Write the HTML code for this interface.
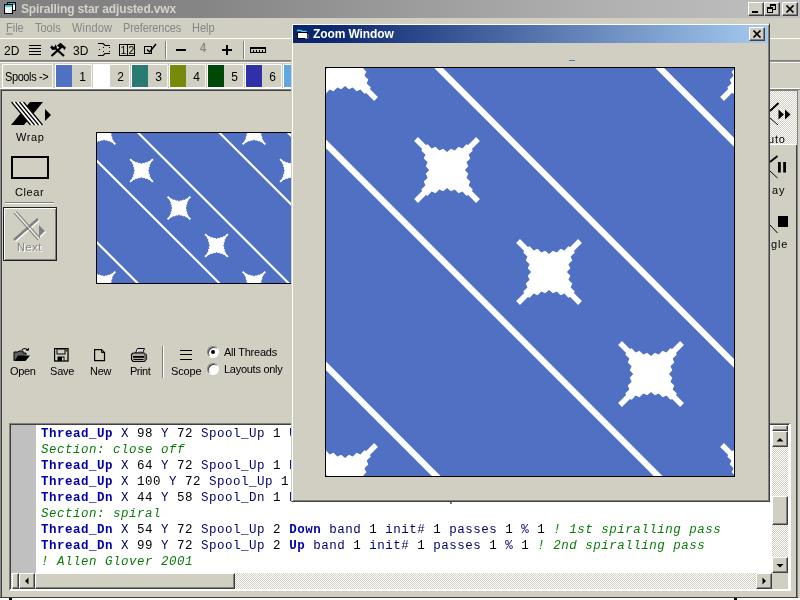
<!DOCTYPE html>
<html>
<head>
<meta charset="utf-8">
<title>Spiralling star adjusted.vwx</title>
<style>
*{box-sizing:border-box;margin:0;padding:0}
html,body{width:800px;height:600px;overflow:hidden;background:#d1cec2}
body{position:relative;will-change:transform;font-family:"Liberation Sans",sans-serif;font-size:11px;color:#000}
.a{position:absolute}
.t{position:absolute;white-space:nowrap;line-height:1}
#titlebar{left:0;top:0;width:800px;height:18px;background:linear-gradient(90deg,#808080 0%,#858585 25%,#b0b0b0 75%,#c0c0c0 100%)}
.cb{position:absolute;width:16px;height:14px;background:#d1cec2;border:1px solid;border-color:#fff #404040 #404040 #fff;box-shadow:inset -1px -1px 0 #808080}
.rb{background:#d1cec2;border:1px solid;border-color:#fff #404040 #404040 #fff;box-shadow:inset -1px -1px 0 #808080}
.m{position:absolute;top:22px;font-size:11px;color:#868686;white-space:nowrap;line-height:1;transform:scaleY(1.14);transform-origin:0 0}
.sp{position:absolute;top:64px;height:24px;width:37px;border:1px solid;border-color:#fff #f4f2ee #fff #fff}
.sp i{position:absolute;left:0;top:0;width:16px;height:22px}
.sp b{position:absolute;left:17px;top:6px;width:19px;text-align:center;font-weight:normal;font-size:12px;line-height:1;transform:scaleY(1.08);transform-origin:0 50%}
.lbl{position:absolute;white-space:nowrap;line-height:1;font-size:11px;letter-spacing:.6px}
.dith{background-color:#e9e7e3;background-image:conic-gradient(#fff 25%,#d1cec2 0 50%,#fff 0 75%,#d1cec2 0);background-size:2px 2px}
.code{position:absolute;left:41px;white-space:pre;font-family:"Liberation Mono",monospace;font-size:12.5px;letter-spacing:.499px;line-height:16px;color:#000068;height:16px}
.code b{color:#0000a4}
.code i{color:#0a7a0a}
.code s{color:#000;text-decoration:none}
</style>
</head>
<body>

<svg width="0" height="0" style="position:absolute"><defs>
<g id="star" transform="scale(0.3676)"><path d="M-27.00,-27.00L-23.14,-24.20L-19.29,-25.67L-15.43,-21.62L-11.57,-23.26L-7.71,-19.41L-3.86,-21.31L0.00,-17.90L3.86,-21.31L7.71,-19.41L11.57,-23.26L15.43,-21.62L19.29,-25.67L23.14,-24.20L27.00,-27.00L24.20,-23.14L25.67,-19.29L21.62,-15.43L23.26,-11.57L19.41,-7.71L21.31,-3.86L17.90,0.00L21.31,3.86L19.41,7.71L23.26,11.57L21.62,15.43L25.67,19.29L24.20,23.14L27.00,27.00L23.14,24.20L19.29,25.67L15.43,21.62L11.57,23.26L7.71,19.41L3.86,21.31L0.00,17.90L-3.86,21.31L-7.71,19.41L-11.57,23.26L-15.43,21.62L-19.29,25.67L-23.14,24.20L-27.00,27.00L-24.20,23.14L-25.67,19.29L-21.62,15.43L-23.26,11.57L-19.41,7.71L-21.31,3.86L-17.90,0.00L-21.31,-3.86L-19.41,-7.71L-23.26,-11.57L-21.62,-15.43L-25.67,-19.29L-24.20,-23.14Z" fill="#fff"/><path d="M-31.0,-31.0L31.0,31.0M31.0,-31.0L-31.0,31.0" stroke="#fff" stroke-width="5.4" fill="none"/></g>
<g id="pat"><rect x="-5" y="-5" width="320" height="170" fill="#4f70c3"/><path d="M21.4,-20L221.4,180" stroke="#fff" fill="none"/><path d="M-47.9,-20L152.1,180" stroke="#fff" fill="none"/><path d="M-129.5,-20L70.5,180" stroke="#fff" fill="none"/><path d="M102.7,-20L302.7,180" stroke="#fff" fill="none"/><path d="M171.4,-20L371.4,180" stroke="#fff" fill="none"/><path d="M252.1,-20L452.1,180" stroke="#fff" fill="none"/><use href="#star" x="7.00" y="150.00"/><use href="#star" x="7.00" y="0.00"/><use href="#star" x="44.50" y="37.50"/><use href="#star" x="82.00" y="75.00"/><use href="#star" x="119.50" y="112.50"/><use href="#star" x="157.00" y="150.00"/><use href="#star" x="157.00" y="0.00"/><use href="#star" x="194.50" y="37.50"/><use href="#star" x="232.00" y="75.00"/><use href="#star" x="269.50" y="112.50"/><use href="#star" x="307.00" y="150.00"/><use href="#star" x="307.00" y="0.00"/></g>
</defs></svg>

<div class="a" id="titlebar"></div>
<svg class="a" style="left:3px;top:1px" width="14" height="14" viewBox="0 0 14 14">
  <rect x="4.500" y="1.500" width="8" height="8" fill="#fff" stroke="#000" stroke-width="1"/>
  <rect x="5" y="2" width="7" height="2" fill="#30b8c8"/>
  <rect x="1.500" y="3.500" width="8" height="9" fill="#d8eef0" stroke="#000" stroke-width="1"/>
  <rect x="2" y="4" width="7" height="2" fill="#48c8d4"/>
  <rect x="3" y="7" width="4" height="5" fill="#fff"/>
</svg>
<div class="t" id="ttl" style="left:21px;top:3px;font-weight:bold;font-size:12px;color:#d6d2ca;letter-spacing:-.13px">Spiralling star adjusted.vwx</div>
<div class="cb" style="left:748px;top:2px"><div class="a" style="left:3px;top:8px;width:6px;height:2px;background:#000"></div></div>
<div class="cb" style="left:764px;top:2px">
  <div class="a" style="left:5px;top:1px;width:6px;height:6px;border:1px solid #000;border-top-width:2px"></div>
  <div class="a" style="left:2px;top:4px;width:6px;height:6px;border:1px solid #000;border-top-width:2px;background:#d1cec2"></div>
</div>
<div class="cb" style="left:782px;top:2px">
  <svg class="a" style="left:3px;top:2px" width="9" height="8" viewBox="0 0 9 8"><path d="M0.500,0.500L7.500,7.500M7.500,0.500L0.500,7.500" stroke="#000" stroke-width="1.700" fill="none"/></svg>
</div>


<div class="m" style="left:6px"><u>F</u>ile</div>
<div class="m" style="left:35px">Tools</div>
<div class="m" style="left:72px;letter-spacing:.15px">Window</div>
<div class="m" style="left:123px;letter-spacing:-.1px">Preferences</div>
<div class="m" style="left:192px">Help</div>


<div class="a" style="left:0;top:38px;width:800px;height:1px;background:#fff"></div>
<div class="a" style="left:0;top:60px;width:800px;height:1px;background:#808080"></div>
<div class="a" style="left:0;top:61px;width:800px;height:1px;background:#9a9890"></div>
<div class="a" style="left:0;top:62px;width:800px;height:1px;background:#f4f2ee"></div>
<div class="t" style="left:4px;top:45px;font-size:12px">2D</div>
<svg class="a" style="left:28px;top:43px" width="15" height="14" viewBox="0 0 15 14"><path d="M1,2.500H13M1,5.500H13M1,8.500H13M1,11.500H13" stroke="#000" stroke-width="1.200" fill="none"/></svg>
<svg class="a" style="left:49px;top:42px" width="18" height="16" viewBox="0 0 18 16">
  <path d="M2.500,14L13,4.500" stroke="#000" stroke-width="2.200" fill="none"/>
  <path d="M8,3.500L11.500,0.800L17,5.500L15.500,8L13.500,5.500L11.500,6.500Z" fill="#000"/>
  <path d="M15,14L5.500,5.500" stroke="#000" stroke-width="2.200" fill="none"/>
  <path d="M1.200,5.500L3,3.200L4.200,5L6,4.200L6,2.200L8,4.800L6.500,7.500L3.500,8Z" fill="#000"/>
</svg>
<div class="t" style="left:73px;top:45px;font-size:12px">3D</div>
<svg class="a" style="left:97px;top:42px" width="15" height="16" viewBox="0 0 15 16">
  <path d="M1,1.500H6L8,3.500H13M1,13.500H6L8,11.500H13" stroke="#000" stroke-width="1.100" fill="none"/>
  <path d="M2,7H3V8H2zM6,5H7V6H6zM6,9H7V10H6zM12,5H13V6H12zM12,9H13V10H12z" fill="#000"/>
</svg>
<div class="a" style="left:119px;top:44px;width:16px;height:12px;border:1px solid #000"></div>
<div class="a" style="left:127px;top:44px;width:1px;height:12px;background:#000"></div>
<div class="t" style="left:120px;top:45px;font-size:10.5px;width:7px;text-align:center">1</div>
<div class="t" style="left:128px;top:45px;font-size:10.5px;width:7px;text-align:center">2</div>
<div class="a" style="left:144px;top:46px;width:8px;height:8px;border:1px solid #000"></div>
<svg class="a" style="left:144px;top:42px" width="14" height="14" viewBox="0 0 14 14"><path d="M3,7.500L5.500,10L8,7L12,2" stroke="#000" stroke-width="1.500" fill="none"/></svg>
<div class="a" style="left:165px;top:41px;width:1px;height:18px;background:#808080"></div>
<div class="a" style="left:166px;top:41px;width:1px;height:18px;background:#fff"></div>
<div class="a" style="left:176px;top:49px;width:10px;height:2px;background:#000"></div>
<div class="t" style="left:200px;top:41px;font-size:13.5px;font-weight:bold;color:#8a8a8a;transform:scaleX(.82);transform-origin:0 0">4</div>
<div class="a" style="left:222px;top:49px;width:10px;height:2px;background:#000"></div>
<div class="a" style="left:226px;top:45px;width:2px;height:10px;background:#000"></div>
<div class="a" style="left:243px;top:41px;width:1px;height:18px;background:#808080"></div>
<div class="a" style="left:244px;top:41px;width:1px;height:18px;background:#fff"></div>
<svg class="a" style="left:250px;top:46px" width="17" height="8" viewBox="0 0 17 8"><path d="M0.500,6.500V1.500H15.500V6.500ZM3.500,6V4M6.500,6V4M9.500,6V4M12.500,6V4" stroke="#000" stroke-width="1.100" fill="none"/><rect x="0" y="1" width="16" height="2" fill="#000"/></svg>

<div class="a" style="left:2px;top:64px;width:51px;height:24px;border:1px solid;border-color:#fff #f4f2ee #fff #fff"></div>
<div class="t" style="left:5px;top:71px;font-size:11px;letter-spacing:-.4px;transform:scaleY(1.1);transform-origin:0 0">Spools -&gt;</div>
<div class="sp" style="left:55px"><i style="background:#4f70c3"></i><b>1</b></div>
<div class="sp" style="left:93px"><i style="background:#ffffff"></i><b>2</b></div>
<div class="sp" style="left:131px"><i style="background:#2a7a74"></i><b>3</b></div>
<div class="sp" style="left:169px"><i style="background:#788a0c"></i><b>4</b></div>
<div class="sp" style="left:207px"><i style="background:#004808"></i><b>5</b></div>
<div class="sp" style="left:245px"><i style="background:#3030a8"></i><b>6</b></div>
<div class="sp" style="left:283px"><i style="background:#60a8e4"></i><b>7</b></div>
<div class="a" style="left:0;top:88px;width:800px;height:1px;background:#fff"></div>
<div class="a" style="left:0;top:89px;width:800px;height:1px;background:#808080"></div>
<div class="a" style="left:1px;top:90px;width:796px;height:1px;background:#404040"></div>

<div class="a" style="left:0;top:90px;width:1px;height:508px;background:#8c8c8c"></div>
<div class="a" style="left:1px;top:90px;width:1px;height:508px;background:#404040"></div>
<div class="a" style="left:796px;top:90px;width:1px;height:508px;background:#404040"></div>
<div class="a" style="left:797px;top:90px;width:1px;height:508px;background:#808080"></div>
<div class="a" style="left:0;top:597px;width:798px;height:1px;background:#404040"></div>
<div class="a" style="left:0;top:598px;width:800px;height:2px;background:#fff"></div>
<div class="a" style="left:9px;top:598px;width:3px;height:2px;background:#000"></div>
<div class="a" style="left:734px;top:598px;width:3px;height:2px;background:#000"></div>


<svg class="a" style="left:10px;top:101px" width="44" height="26" viewBox="0 0 44 26">
  <path d="M1,24L14,24L33,1L20,1Z" fill="#000"/>
  <path d="M1,1L14,1L33,24L20,24Z" fill="#fff"/>
  <path d="M1.500,1L20.500,24M5.500,1L24.500,24M9.500,1L28.500,24M13.500,1L32.500,24" stroke="#000" stroke-width="1.200" fill="none"/>
  <path d="M35,8L41,14L35,20Z" fill="#000"/>
</svg>
<div class="lbl" style="left:16px;top:132px">Wrap</div>
<div class="a" style="left:11px;top:156px;width:38px;height:23px;border:2px solid #000"></div>
<div class="lbl" style="left:15px;top:187px">Clear</div>
<div class="a" style="left:5px;top:202px;width:49px;height:1px;background:#808080"></div>
<div class="a" style="left:5px;top:203px;width:49px;height:1px;background:#fff"></div>
<div class="a" style="left:3px;top:207px;width:54px;height:54px;background:#d1cec2;border:1px solid #202020;box-shadow:inset 1px 1px 0 #fff,inset -1px -1px 0 #808080"></div>
<svg class="a" style="left:12px;top:210px" width="36" height="32" viewBox="0 0 36 32">
  <path d="M3,31L27,10" stroke="#fff" stroke-width="2.500" fill="none"/>
  <path d="M2,30L26,9" stroke="#808080" stroke-width="2.500" fill="none"/>
  <path d="M2,3L26,30M4.500,1.500L28,28" stroke="#808080" stroke-width="1.100" fill="none"/>
  <path d="M3.200,2.200L27,29" stroke="#fff" stroke-width=".8" fill="none"/>
  <path d="M28,16L34,22L28,28Z" fill="#fff"/>
  <path d="M27,15L33,21L27,27Z" fill="#808080"/>
</svg>
<div class="lbl" style="left:18px;top:243px;color:#fff">Next</div>
<div class="lbl" style="left:17px;top:242px;color:#848484">Next</div>


<div class="a" style="left:96px;top:132px;width:200px;height:152px;background:#000"></div>
<svg class="a" style="left:97px;top:133px;stroke-width:2.1" width="200" height="150" viewBox="0 0 200 150"><use href="#pat"/></svg>


<svg class="a" style="left:13px;top:347px" width="18" height="16" viewBox="0 0 18 16">
  <path d="M1,14V5H5L6,4H10V6H13V8" fill="#606060" stroke="#000" stroke-width="1"/>
  <path d="M1.500,14L5,8.500H17L12.500,14Z" fill="#000"/>
  <path d="M9,3C10.500,1 13.500,1 14.500,3.500" stroke="#000" stroke-width="1.100" fill="none"/>
  <path d="M12.500,3.500H16V0.800Z" fill="#000"/>
</svg>
<div class="lbl" style="left:10px;top:366px;letter-spacing:-.35px">Open</div>
<svg class="a" style="left:54px;top:348px" width="15" height="14" viewBox="0 0 15 14">
  <rect x="0.500" y="0.500" width="13.500" height="12.500" fill="none" stroke="#000" stroke-width="1.300"/>
  <rect x="3" y="1" width="8" height="5" fill="none" stroke="#000" stroke-width="1"/>
  <rect x="3.500" y="8.500" width="7" height="4.500" fill="#000"/>
  <rect x="8" y="9.500" width="1.600" height="3" fill="#d1cec2"/>
  <rect x="11.800" y="1.500" width="1" height="2" fill="#000"/>
</svg>
<div class="lbl" style="left:50px;top:366px;letter-spacing:-.2px">Save</div>
<svg class="a" style="left:94px;top:349px" width="12" height="13" viewBox="0 0 12 13">
  <path d="M0.600,0.600H7.500L10.500,3.600V11.600H0.600Z" fill="#d1cec2" stroke="#000" stroke-width="1.200"/>
  <path d="M7.500,0.600V3.600H10.500" fill="none" stroke="#000" stroke-width="1"/>
</svg>
<div class="lbl" style="left:90px;top:366px;letter-spacing:-.25px">New</div>
<svg class="a" style="left:130px;top:347px" width="18" height="16" viewBox="0 0 18 16">
  <path d="M5.500,6L7.500,1.500H14.500L12.500,6Z" fill="#fff" stroke="#000" stroke-width="1"/>
  <path d="M8.500,3H12.500M8,4.500H12" stroke="#555" stroke-width=".5"/>
  <path d="M3,6H14L16.500,8V12L14.500,14.500H3L1.500,12.500V7.500Z" fill="#b0aca4" stroke="#000" stroke-width="1.100"/>
  <path d="M3,9H14V10.800H3Z" fill="#000"/>
  <path d="M3.500,12.500H13.500" stroke="#000" stroke-width="1"/>
  <path d="M14,6L16.500,8V12L14.500,14.500Z" fill="#606060"/>
</svg>
<div class="lbl" style="left:130px;top:366px;letter-spacing:-.47px">Print</div>
<div class="a" style="left:162px;top:346px;width:1px;height:32px;background:#808080"></div>
<div class="a" style="left:163px;top:346px;width:1px;height:32px;background:#fff"></div>
<div class="a" style="left:180px;top:350px;width:12px;height:1px;background:#000"></div>
<div class="a" style="left:180px;top:354px;width:12px;height:1px;background:#000"></div>
<div class="a" style="left:180px;top:359px;width:12px;height:1px;background:#000"></div>
<div class="lbl" style="left:171px;top:366px;letter-spacing:-.12px">Scope</div>
<div class="a" style="left:207px;top:346px;width:12px;height:12px;border-radius:50%;background:#fff;border:1px solid;border-color:#808080 #fff #fff #808080;box-shadow:inset 1px 1px 0 #404040"></div>
<div class="a" style="left:211px;top:350px;width:4px;height:4px;border-radius:50%;background:#000"></div>
<div class="t" style="left:224px;top:347px;font-size:11px;letter-spacing:-.22px">All Threads</div>
<div class="a" style="left:207px;top:363px;width:12px;height:12px;border-radius:50%;background:#fff;border:1px solid;border-color:#808080 #fff #fff #808080;box-shadow:inset 1px 1px 0 #404040"></div>
<div class="t" style="left:224px;top:364px;font-size:11px;letter-spacing:-.27px">Layouts only</div>


<div class="a" style="left:9px;top:423px;width:782px;height:168px;background:#fff;border:1px solid;border-color:#808080 #fff #fff #808080"></div>
<div class="a" style="left:10px;top:424px;width:779px;height:165px;border:1px solid;border-color:#404040 #d1cec2 #d1cec2 #404040;border-right:0;border-bottom:0"></div>
<div class="a" style="left:11px;top:425px;width:25px;height:148px;background:#c0c0c0"></div>

<div class="code" style="top:426px"><b>Thread_Up</b> X <s>98</s> Y <s>72</s> Spool_Up <s>1</s> <b>Up</b> band <s>1</s> init# <s>1</s> passes <s>1</s> % <s>1</s></div>
<div class="code" style="top:442px"><i>Section: close off</i></div>
<div class="code" style="top:458px"><b>Thread_Up</b> X <s>64</s> Y <s>72</s> Spool_Up <s>1</s> <b>Down</b> band <s>1</s> init# <s>1</s> passes <s>1</s> % <s>1</s></div>
<div class="code" style="top:474px"><b>Thread_Up</b> X <s>100</s> Y <s>72</s> Spool_Up <s>1</s> <b>Up</b> band <s>1</s> init# <s>1</s> passes <s>1</s> % <s>1</s></div>
<div class="code" style="top:490px"><b>Thread_Dn</b> X <s>44</s> Y <s>58</s> Spool_Dn <s>1</s> <b>Down</b> band <s>1</s> init# <s>1</s> passes <s>1</s> % <s>1</s></div>
<div class="code" style="top:506px"><i>Section: spiral</i></div>
<div class="code" style="top:522px"><b>Thread_Dn</b> X <s>54</s> Y <s>72</s> Spool_Up <s>2</s> <b>Down</b> band <s>1</s> init# <s>1</s> passes <s>1</s> % <s>1</s> <i>! 1st spiralling pass</i></div>
<div class="code" style="top:538px"><b>Thread_Dn</b> X <s>99</s> Y <s>72</s> Spool_Up <s>2</s> <b>Up</b> band <s>1</s> init# <s>1</s> passes <s>1</s> % <s>1</s> <i>! 2nd spiralling pass</i></div>
<div class="code" style="top:554px"><i>! Allen Glover 2001</i></div>
<div class="a dith" style="left:772px;top:425px;width:16px;height:148px"></div>
<div class="a dith" style="left:11px;top:573px;width:761px;height:16px"></div>
<div class="a" style="left:772px;top:573px;width:16px;height:16px;background:#d1cec2"></div>
<div class="a rb" style="left:772px;top:425px;width:16px;height:6px"></div>
<div class="a rb" style="left:772px;top:431px;width:16px;height:16px"><svg class="a" style="left:-1px;top:-1px" width="16" height="16" viewBox="0 0 16 16"><path d="M4.500,10.500L8,7L11.500,10.500Z" fill="#000"/></svg></div>
<div class="a rb" style="left:772px;top:496px;width:16px;height:29px"></div>
<div class="a rb" style="left:772px;top:557px;width:16px;height:16px"><svg class="a" style="left:-1px;top:-1px" width="16" height="16" viewBox="0 0 16 16"><path d="M4.500,7L8,10.500L11.500,7Z" fill="#000"/></svg></div>
<div class="a rb" style="left:12px;top:573px;width:7px;height:16px"></div>
<div class="a rb" style="left:19px;top:573px;width:16px;height:16px"><svg class="a" style="left:-1px;top:-1px" width="16" height="16" viewBox="0 0 16 16"><path d="M9.500,4.500L6,8L9.500,11.500Z" fill="#000"/></svg></div>
<div class="a rb" style="left:35px;top:573px;width:200px;height:16px"></div>
<div class="a rb" style="left:756px;top:573px;width:16px;height:16px"><svg class="a" style="left:-1px;top:-1px" width="16" height="16" viewBox="0 0 16 16"><path d="M6.500,4.500L10,8L6.500,11.500Z" fill="#000"/></svg></div>

<div class="a dith" style="left:770px;top:91px;width:27px;height:53px"></div>
<div class="a" style="left:770px;top:90px;width:27px;height:1px;background:#808080"></div>
<div class="a" style="left:770px;top:144px;width:27px;height:1px;background:#fff"></div>
<svg class="a" style="left:768px;top:100px" width="26" height="28" viewBox="0 0 26 28">
  <path d="M2,11L10.500,3" stroke="#000" stroke-width="1.800" fill="none"/>
  <path d="M2,18L10,25" stroke="#000" stroke-width="1" fill="none"/>
  <path d="M10.500,9.500L16,14.500L10.500,19.500ZM17,9.500L22.500,14.500L17,19.500Z" fill="#000"/>
</svg>
<div class="lbl" style="left:768px;top:134px;letter-spacing:.8px">uto</div>
<svg class="a" style="left:768px;top:152px" width="26" height="28" viewBox="0 0 26 28">
  <path d="M2,10L9.500,4" stroke="#000" stroke-width="1.800" fill="none"/>
  <path d="M2,19L9.500,26" stroke="#000" stroke-width="1" fill="none"/>
  <path d="M10,10H12.800V20.500H10ZM15.200,10H18V20.500H15.200Z" fill="#000"/>
</svg>
<div class="lbl" style="left:772px;top:185px;letter-spacing:1px">ay</div>
<svg class="a" style="left:768px;top:210px" width="26" height="28" viewBox="0 0 26 28">
  <path d="M2,15L9.500,23" stroke="#000" stroke-width="1" fill="none"/>
  <path d="M10,6H20V17H10Z" fill="#000"/>
</svg>
<div class="lbl" style="left:771px;top:239px;letter-spacing:.8px">gle</div>


<div class="a" style="left:291px;top:23px;width:479px;height:479px;background:#d1cec2;border:1px solid;border-color:#d1cec2 #404040 #404040 #d1cec2;box-shadow:inset 1px 1px 0 #fff,inset -1px -1px 0 #808080"></div>
<div class="a" style="left:293px;top:25px;width:475px;height:18px;background:linear-gradient(90deg,#0a246a 0%,#0c2870 8%,#a6caf0 100%)"></div>
<svg class="a" style="left:296px;top:28px" width="14" height="13" viewBox="0 0 14 13">
  <path d="M1,2.500H5L6,3.500H10V5" fill="none" stroke="#50d0d8" stroke-width="1.400"/>
  <path d="M1.500,4.500H11.500V10.500H1.500Z" fill="#fff" stroke="#000" stroke-width="1"/>
  <path d="M9,10.500H12L12,6" stroke="#808080" stroke-width="1" fill="none"/>
</svg>
<div class="t" id="ztl" style="left:313px;top:28px;font-weight:bold;font-size:12px;color:#fff;letter-spacing:-.1px">Zoom Window</div>
<div class="cb" style="left:749px;top:27px">
  <svg class="a" style="left:3px;top:2px" width="9" height="8" viewBox="0 0 9 8"><path d="M0.500,0.500L7.500,7.500M7.500,0.500L0.500,7.500" stroke="#000" stroke-width="1.700" fill="none"/></svg>
</div>
<div class="a" style="left:569px;top:60px;width:6px;height:1px;background:#4a78c0"></div>
<div class="a" style="left:325px;top:67px;width:410px;height:410px;background:#000"></div>
<svg class="a" style="left:326px;top:68px;stroke-width:2.3" width="408" height="408" viewBox="0 0 150 150"><use href="#pat"/></svg>

</body>
</html>
